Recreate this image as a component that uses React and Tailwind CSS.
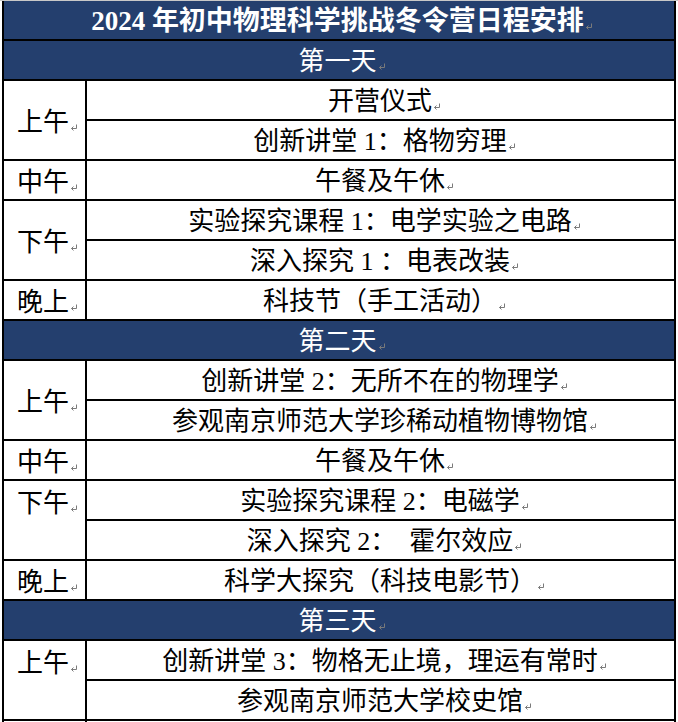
import React from 'react';

const FONT = { fontFamily: '"Liberation Serif", "Noto Sans CJK SC", serif' };

// Word's paragraph mark after every cell text
const Mark = () => (
    <svg width="8" height="7" viewBox="0 0 8 7" className="inline-block align-baseline ml-[1px]" fill="none" stroke="#7a7a7a" strokeWidth="1">
        <path d="M6.5 0.5 V4.5 H1.5" />
        <path d="M3.5 2.5 L1.5 4.5 L3.5 6.5" />
    </svg>
);

const days = [
    {
        title: '第一天',
        rows: [
            { label: '上午', span: 2, align: 'align-middle', items: ['开营仪式', '创新讲堂 1：格物穷理'] },
            { label: '中午', span: 1, align: 'align-middle', items: ['午餐及午休'] },
            { label: '下午', span: 2, align: 'align-middle', items: ['实验探究课程 1：电学实验之电路', '深入探究 1 ：电表改装'] },
            { label: '晚上', span: 1, align: 'align-middle', items: ['科技节（手工活动）'] },
        ],
    },
    {
        title: '第二天',
        rows: [
            { label: '上午', span: 2, align: 'align-middle', items: ['创新讲堂 2：无所不在的物理学', '参观南京师范大学珍稀动植物博物馆'] },
            { label: '中午', span: 1, align: 'align-middle', items: ['午餐及午休'] },
            { label: '下午', span: 2, align: 'align-top', items: ['实验探究课程 2：电磁学', '深入探究 2：  霍尔效应'] },
            { label: '晚上', span: 1, align: 'align-middle', items: ['科学大探究（科技电影节）'] },
        ],
    },
    {
        title: '第三天',
        rows: [
            { label: '上午', span: 2, align: 'align-top', items: ['创新讲堂 3：物格无止境，理运有常时', '参观南京师范大学校史馆'] },
        ],
    },
];

const App = () => {
    return (
        <div className="bg-white min-h-screen border-t border-[#c8c8c8]" style={FONT}>
            <table className="ml-[2px] w-[674px] border-collapse table-fixed text-black">
                <colgroup>
                    <col className="w-[83px]" />
                    <col />
                </colgroup>
                <tbody>
                    <tr className="h-[39px] bg-[#243f6e] text-white">
                        <td colSpan={2} className="border-2 border-black border-t-0 text-center text-[27px] font-bold leading-none p-0 pt-[2px] pl-[6px]">
                            2024 年初中物理科学挑战冬令营日程安排<Mark />
                        </td>
                    </tr>
                    {days.map(day => (
                        <React.Fragment key={day.title}>
                            <tr className="h-[40px] bg-[#243f6e] text-white">
                                <td colSpan={2} className="border-2 border-black text-center text-[26px] leading-none p-0 pt-[3px] pl-[6px]">
                                    {day.title}<Mark />
                                </td>
                            </tr>
                            {day.rows.map(row =>
                                row.items.map((item, i) => (
                                    <tr key={row.label + item} className="h-[40px]">
                                        {i === 0 && (
                                            <td
                                                rowSpan={row.span}
                                                className={`border-2 border-black text-center text-[26px] leading-none p-0 pl-[6px] ${row.align} ${row.align === 'align-top' ? 'pt-[10px]' : 'pt-[5px]'}`}
                                            >
                                                {row.label}<Mark />
                                            </td>
                                        )}
                                        <td className="border-2 border-black text-center text-[26px] leading-none p-0 pt-[3px] pl-[8px] whitespace-pre">
                                            {item}<Mark />
                                        </td>
                                    </tr>
                                ))
                            )}
                        </React.Fragment>
                    ))}
                    {/* next row, only its top shows in the frame */}
                    <tr className="h-[40px]">
                        <td className="border-2 border-black p-0"></td>
                        <td className="border-2 border-black p-0"></td>
                    </tr>
                </tbody>
            </table>
        </div>
    );
};

export default App;
